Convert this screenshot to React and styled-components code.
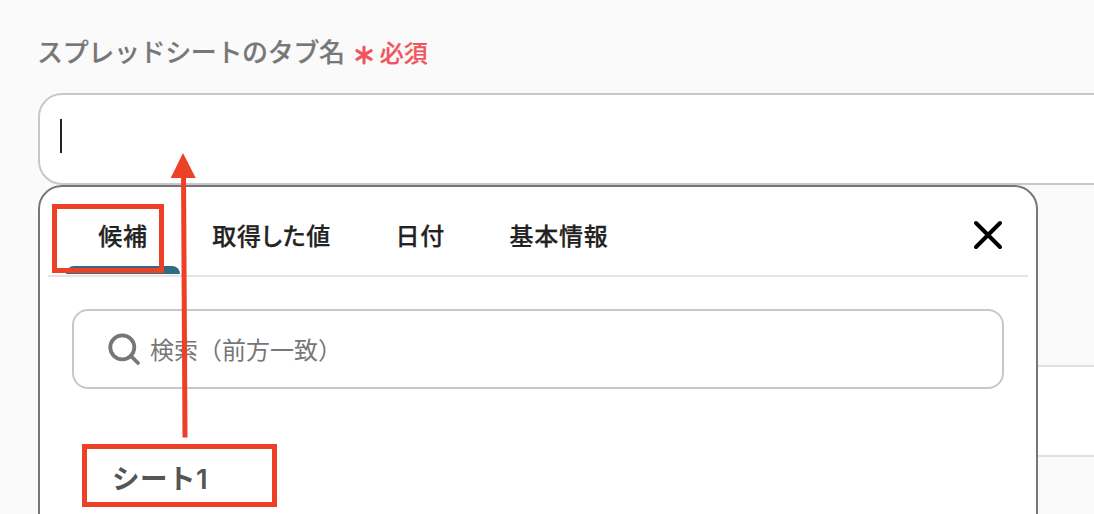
import React from "react";
import styled, { createGlobalStyle } from "styled-components";

const App = () => {
  return (
    <Page>
      <GlobalStyle />
      <Label>
        <LabelText>スプレッドシートのタブ名</LabelText>
        <Required>
          <svg width="18" height="20" viewBox="0 0 18 20">
            <path d="M9 2V18M1.9 5.7L16.1 14.3M16.1 5.7L1.9 14.3" />
          </svg>
          <span>必須</span>
        </Required>
      </Label>
      <Field>
        <Caret />
        <Popup>
          <Tabs>
            <Tab $active>候補</Tab>
            <Tab>取得した値</Tab>
            <Tab>日付</Tab>
            <Tab>基本情報</Tab>
            <Close aria-label="閉じる">
              <svg width="32" height="32" viewBox="0 0 32 32">
                <path d="M4 4L28 28M28 4L4 28" />
              </svg>
            </Close>
          </Tabs>
          <Search>
            <svg width="36" height="36" viewBox="0 0 36 36">
              <circle cx="16.3" cy="16.3" r="12" />
              <path d="M25 25L32 32" />
            </svg>
            <span>検索（前方一致）</span>
          </Search>
          <Option>シート1</Option>
        </Popup>
      </Field>
      <NextField />
      <Highlight $x={52} $y={204} $width={112} $height={69} />
      <Highlight $x={82} $y={444} $width={195} $height={63} />
      <Arrow width="30" height="290" viewBox="0 0 30 290">
        <path d="M13.5 22L15 287.5" />
        <polygon points="13,3 25.7,28 0.7,28" />
      </Arrow>
    </Page>
  );
};

const GlobalStyle = createGlobalStyle`
  * {
    box-sizing: border-box;
  }
  body {
    margin: 0;
    background: #fafafa;
    font-family: "Noto Sans CJK JP", "Noto Sans", sans-serif;
  }
`;

const Page = styled.main`
  position: relative;
  height: 514px;
  overflow: hidden;
  padding-left: 37px;
  background: #fafafa;
`;

const Label = styled.div`
  display: flex;
  align-items: center;
  height: 93px;
  padding-top: 8px;
`;

const LabelText = styled.span`
  color: #777;
  font-size: 26px;
  font-weight: 500;
  letter-spacing: -0.36px;
  white-space: nowrap;
  -webkit-text-stroke: 0.15px currentColor;
`;

const Required = styled.span`
  display: flex;
  align-items: center;
  margin: 2px 0 0 10px;
  color: #f0565f;
  font-size: 24px;
  font-weight: 500;
  -webkit-text-stroke: 0.25px currentColor;
  svg {
    margin: 7px 7px 0 0;
    fill: none;
    stroke: currentColor;
    stroke-width: 3.1;
    stroke-linecap: round;
  }
`;

const Field = styled.div`
  position: relative;
  width: 1100px;
  height: 92px;
  margin-left: 1px;
  padding: 24px 20px;
  background: #fff;
  border: 2px solid #c8c8c8;
  border-radius: 24px;
`;

const Caret = styled.div`
  width: 2px;
  height: 34px;
  background: #212529;
`;

const Popup = styled.div`
  position: absolute;
  z-index: 1;
  top: 90px;
  left: -2px;
  width: 1000px;
  height: 400px;
  padding: 0 8px;
  background: #fff;
  border: 2px solid #777;
  border-radius: 24px;
`;

const Tabs = styled.div`
  display: flex;
  height: 90px;
  padding: 0 18px;
  border-bottom: 2px solid #e4e4e4;
`;

const Tab = styled.div`
  position: relative;
  display: flex;
  align-items: center;
  height: 87px;
  padding: 7px 32.3px 0;
  color: #222;
  font-size: 24px;
  font-weight: 500;
  letter-spacing: 0.7px;
  font-feature-settings: "palt";
  white-space: nowrap;
  -webkit-text-stroke: 0.25px currentColor;
  &::after {
    content: "";
    display: ${({ $active }) => ($active ? "block" : "none")};
    position: absolute;
    right: 0;
    bottom: 0;
    left: 0;
    height: 8px;
    border-radius: 8px 8px 0 0;
    background: #2f6b82;
  }
`;

const Close = styled.button`
  display: flex;
  align-items: center;
  margin-left: auto;
  margin-right: 6px;
  padding: 8px 0 0;
  background: none;
  border: none;
  svg {
    fill: none;
    stroke: #000;
    stroke-width: 4;
    stroke-linecap: round;
  }
`;

const Search = styled.div`
  display: flex;
  align-items: center;
  width: 932px;
  height: 80px;
  margin: 32px 0 0 24px;
  padding-left: 32px;
  border: 2px solid #c8c8c8;
  border-radius: 16px;
  color: #777;
  font-size: 24px;
  svg {
    margin-right: 8px;
    fill: none;
    stroke: currentColor;
    stroke-width: 3.8;
    stroke-linecap: round;
  }
  span {
    margin-top: -2px;
  }
`;

const Option = styled.div`
  margin: 70px 0 0 64px;
  color: #555;
  font-family: Inter, "Noto Sans CJK JP", sans-serif;
  font-size: 27.5px;
  font-weight: 600;
  letter-spacing: 0.5px;
  line-height: 40px;
`;

const NextField = styled.div`
  height: 92px;
  margin: 180px 0 0 3px;
  background: #fff;
  border: solid #dde1e6;
  border-width: 2px 0;
`;

const Highlight = styled.div`
  position: absolute;
  z-index: 2;
  top: ${({ $y }) => $y}px;
  left: ${({ $x }) => $x}px;
  width: ${({ $width }) => $width}px;
  height: ${({ $height }) => $height}px;
  border: 5px solid #ec4127;
`;

const Arrow = styled.svg`
  position: absolute;
  z-index: 2;
  top: 150px;
  left: 170px;
  fill: #ec4127;
  path {
    stroke: #ec4127;
    stroke-width: 5;
  }
`;

export default App;
